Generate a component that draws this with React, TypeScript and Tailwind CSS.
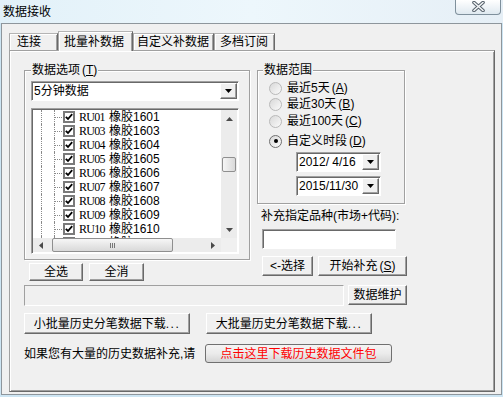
const raised =
  "border border-t-white border-l-white border-r-[#696969] border-b-[#696969] shadow-[inset_-1px_-1px_0_#a0a0a0]";
const sunken =
  "border border-t-[#a0a0a0] border-l-[#a0a0a0] border-r-white border-b-white shadow-[inset_1px_1px_0_#696969]";
const etched = "border border-[#a0a0a0] shadow-[inset_1px_1px_0_#fff,1px_1px_0_#fff]";

const rows = ["01", "03", "04", "05", "06", "07", "08", "09", "10", "11"];

function Tri({ dir = "down" }: { dir?: "down" | "up" | "left" | "right" }) {
  const pts = {
    down: "0,0 7,0 3.5,4",
    up: "0,4 7,4 3.5,0",
    left: "4,0 4,7 0,3.5",
    right: "0,0 0,7 4,3.5",
  }[dir];
  const horiz = dir === "left" || dir === "right";
  return (
    <svg width={horiz ? 4 : 7} height={horiz ? 7 : 4}>
      <polygon points={pts} fill="currentColor" />
    </svg>
  );
}

function Button({ children, className = "" }: { children: React.ReactNode; className?: string }) {
  return (
    <div className={`flex flex-none items-center justify-center bg-[#f0f0f0] leading-[14px] ${raised} ${className}`}>
      {children}
    </div>
  );
}

function Combo({ text, className = "" }: { text: string; className?: string }) {
  return (
    <div className={`flex h-[20px] flex-none bg-white p-[1px] ${sunken} ${className}`}>
      <span className="flex-1 self-center pl-[1px] leading-[14px]">{text}</span>
      <div className={`flex w-[17px] items-center justify-center bg-[#f0f0f0] text-black ${raised}`}>
        <Tri />
      </div>
    </div>
  );
}

function Radio({ label, mnemonic, checked = false, className = "" }: { label: string; mnemonic: string; checked?: boolean; className?: string }) {
  return (
    <div className={`flex h-[16px] items-center ${className}`}>
      <div
        className={`flex h-[13px] w-[13px] flex-none items-center justify-center rounded-full border bg-linear-to-br from-[#d8d8d8] to-[#fbfbfb] ${
          checked ? "border-[#6f6f6f]" : "border-[#b9b9b9]"
        }`}
      >
        {checked && <div className="h-[4px] w-[4px] rounded-full bg-black" />}
      </div>
      <span className="ml-[5px] leading-[14px]">
        {label}
        <span className="ml-[2px]">
          (<u>{mnemonic}</u>)
        </span>
      </span>
    </div>
  );
}

function TreeRow({ code }: { code: string }) {
  return (
    <div className="flex h-[14px] flex-none items-center">
      <div className="ml-[8px] h-full w-[13px] flex-none border-l border-dotted border-[#8a8a8a]" />
      <div className="flex h-full w-[9px] flex-none items-center border-l border-dotted border-[#8a8a8a]">
        <div className="w-[7px] border-t border-dotted border-[#8a8a8a]" />
      </div>
      <div className="flex h-[12px] w-[12px] flex-none items-center justify-center border-2 border-[#7a7a7a] bg-white">
        <svg width="8" height="8" viewBox="0 0 8 8">
          <path d="M0.8 3.8 L3 6 L7.2 1.2" stroke="#000" strokeWidth="1.8" fill="none" />
        </svg>
      </div>
      <span className="ml-[4px] w-[30px] flex-none font-['Liberation_Serif',serif] leading-[14px] tracking-[-0.7px]">
        RU{code}
      </span>
      <span className="flex-none leading-[14px]">橡胶16{code}</span>
    </div>
  );
}

function TreeList() {
  return (
    <div className={`mt-[7px] flex h-[146px] w-[208px] flex-col bg-white p-[1px] ${sunken}`}>
      <div className="flex h-[128px]">
        <div className="flex flex-1 flex-col overflow-hidden">
          {rows.map((r) => (
            <TreeRow key={r} code={r} />
          ))}
        </div>
        <div className="flex w-[16px] flex-col bg-[#ececec] text-[#4a4a4a]">
          <div className="flex h-[17px] items-center justify-center">
            <Tri dir="up" />
          </div>
          <div className="flex-1">
            <div className="mx-[1px] mt-[30px] h-[15px] rounded-[2px] border border-[#8f8f8f] bg-linear-to-r from-[#f6f6f6] to-[#d9d9d9]" />
          </div>
          <div className="flex h-[17px] items-center justify-center">
            <Tri dir="down" />
          </div>
        </div>
      </div>
      <div className="flex h-[14px] bg-[#ececec] text-[#4a4a4a]">
        <div className="flex w-[16px] items-center justify-center">
          <Tri dir="left" />
        </div>
        <div className="flex-1">
          <div className="ml-[3px] flex h-full w-[121px] items-center justify-center gap-[1px] rounded-[2px] border border-[#8f8f8f] bg-linear-to-b from-[#f6f6f6] to-[#d9d9d9]">
            <div className="h-[5px] w-[1px] bg-[#777]" />
            <div className="h-[5px] w-[1px] bg-[#777]" />
            <div className="h-[5px] w-[1px] bg-[#777]" />
          </div>
        </div>
        <div className="flex w-[16px] items-center justify-center">
          <Tri dir="right" />
        </div>
        <div className="w-[16px] bg-[#f0f0f0]" />
      </div>
    </div>
  );
}

function Tab({ label, width, pl, active = false }: { label: string; width: string; pl: string; active?: boolean }) {
  return (
    <div
      className={`flex flex-none items-center border-t border-l border-r border-t-[#b4b4b4] border-l-[#a8a8a8] border-r-[#696969] leading-[14px] shadow-[inset_1px_1px_0_#fff,inset_-1px_0_0_#a0a0a0] ${width} ${pl} ${
        active ? "relative z-10 -mb-px h-[20px] bg-[#f0f0f0]" : "h-[17px]"
      }`}
    >
      {label}
    </div>
  );
}

export default function App() {
  return (
    <div className="flex h-[397px] w-[503px] flex-col overflow-hidden bg-[#cde5f3] font-['Liberation_Sans','Noto_Sans_CJK_SC',sans-serif] text-[12px] text-black">
      <div className="flex h-[23px] flex-none justify-between bg-linear-to-r from-[#e2f1f9] via-[#edf7fc] to-[#e6eff6]">
        <span className="self-center pl-[3px] leading-[14px]">数据接收</span>
        <div className="mr-[2px] flex h-[15px] w-[46px] justify-center rounded-b-[4px] border border-t-0 border-[#7f909c] bg-linear-to-b from-white to-[#dfe9f0] pt-[1px]">
          <svg width="13" height="11" viewBox="0 0 13 11">
            <path d="M2 1.5 L11 9.5 M11 1.5 L2 9.5" stroke="#55606a" strokeWidth="3.6" strokeLinecap="round" />
            <path d="M2 1.5 L11 9.5 M11 1.5 L2 9.5" stroke="#f4f6f8" strokeWidth="1.6" strokeLinecap="round" />
          </svg>
        </div>
      </div>

      <div className="ml-[1px] h-[372px] w-[501px] flex-none border border-[#8e969c] bg-[#f0f0f0] pt-[7px]">
        <div className="ml-[7px] flex h-[19px] items-end">
          <Tab label="连接" width="w-[49px]" pl="pl-[7px]" />
          <Tab label="批量补数据" width="w-[75px]" pl="pl-[5px]" active />
          <Tab label="自定义补数据" width="w-[81px]" pl="pl-[3px]" />
          <Tab label="多档订阅" width="w-[61px]" pl="pl-[5px]" />
        </div>

        <div className="ml-[7px] h-[342px] w-[486px] border border-t-[#a0a0a0] border-l-[#a0a0a0] border-r-[#696969] border-b-[#696969] pl-[14px] pt-[19px] shadow-[inset_1px_1px_0_#fff,inset_-1px_-1px_0_#a0a0a0]">
          <div className="flex items-start gap-[7px]">
            <div className="flex w-[226px] flex-none flex-col">
              <div className={`relative h-[190px] w-[226px] pl-[6px] pt-[10px] ${etched}`}>
                <span className="absolute left-[6px] top-[-8px] bg-[#f0f0f0] px-[1px] leading-[14px]">
                  数据选项<span className="ml-[2px]">(<u>T</u>)</span>
                </span>
                <Combo text="5分钟数据" className="w-[208px]" />
                <TreeList />
              </div>
              <div className="mt-[3px] flex gap-[6px] pl-[5px]">
                <Button className="h-[18px] w-[54px]">全选</Button>
                <Button className="h-[18px] w-[55px]">全消</Button>
              </div>
            </div>

            <div className="flex w-[148px] flex-none flex-col">
              <div className={`relative flex h-[134px] w-[148px] flex-col pl-[11px] pt-[9px] ${etched}`}>
                <span className="absolute left-[5px] top-[-8px] bg-[#f0f0f0] px-[1px] leading-[14px]">数据范围</span>
                <Radio label="最近5天" mnemonic="A" />
                <Radio label="最近30天" mnemonic="B" />
                <Radio label="最近100天" mnemonic="C" className="mt-[1px]" />
                <Radio label="自定义时段" mnemonic="D" checked className="mt-[4px]" />
                <Combo text="2012/ 4/16" className="ml-[27px] mt-[3px] w-[85px]" />
                <Combo text="2015/11/30" className="ml-[27px] mt-[4px] w-[85px]" />
              </div>
              <span className="mt-[5px] pl-[4px] leading-[14px]">补充指定品种(市场+代码):</span>
              <div className={`ml-[5px] mt-[6px] h-[20px] w-[134px] flex-none bg-white ${sunken}`} />
              <div className="ml-[5px] mt-[7px] flex gap-[5px]">
                <Button className="h-[20px] w-[51px]">&lt;-选择</Button>
                <Button className="h-[20px] w-[89px]">
                  开始补充<span className="ml-[2px]">(<u>S</u>)</span>
                </Button>
              </div>
            </div>
          </div>

          <div className="mt-[4px] flex gap-[4px]">
            <div className="h-[21px] w-[320px] border border-t-[#a0a0a0] border-l-[#a0a0a0] border-r-white border-b-white" />
            <Button className="h-[20px] w-[59px]">数据维护</Button>
          </div>

          <div className="mt-[7px] flex gap-[16px]">
            <Button className="h-[21px] w-[166px]">
              小批量历史分笔数据下载<span className="tracking-[1.5px]">...</span>
            </Button>
            <Button className="h-[21px] w-[166px]">
              大批量历史分笔数据下载<span className="tracking-[1.5px]">...</span>
            </Button>
          </div>

          <div className="mt-[10px] flex items-center">
            <span className="w-[181px] flex-none leading-[14px]">如果您有大量的历史数据补充,请</span>
            <div className="flex h-[19px] w-[187px] items-center justify-center rounded-[3px] border border-[#707070] bg-linear-to-b from-[#f4f4f4] via-[#ebebeb] to-[#d5d5d5] leading-[14px] text-[#ff0000]">
              点击这里下载历史数据文件包
            </div>
          </div>
        </div>
      </div>
    </div>
  );
}
